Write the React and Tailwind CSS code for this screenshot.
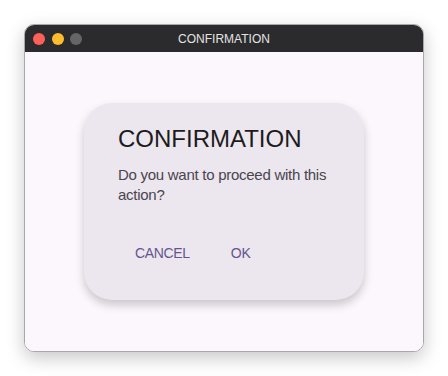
export default function App() {
  return (
    <div className="w-[448px] h-[376px] bg-white pt-6 pl-6" style={{ fontFamily: '"Liberation Sans", Arial, sans-serif' }}>
      <div className="w-[400px] h-[328px] rounded-[10px] border border-[#a9a7ab] overflow-hidden flex flex-col shadow-[0_6px_18px_rgba(0,0,0,0.22)]">
        {/* title bar */}
        <div className="relative h-[27px] bg-[#2b2b2d] flex items-center pl-[8px] gap-[6.5px] shrink-0">
          <span className="w-3 h-3 rounded-full bg-[#fe5f57]" />
          <span className="w-3 h-3 rounded-full bg-[#febc2e]" />
          <span className="w-3 h-3 rounded-full bg-[#656568]" />
          <span className="absolute inset-0 flex items-center justify-center text-[12px] text-[#e4e4e4]">CONFIRMATION</span>
        </div>

        {/* content */}
        <div className="flex-1 bg-[#fcf7fd] flex items-center justify-center">
          <div className="w-[280px] rounded-[28px] bg-[#ece6ee] pt-5 pb-[27px] pl-[34px] pr-6 shadow-[0_5px_10px_rgba(0,0,0,0.2)]">
            <h2 className="text-[24px] leading-[32px] text-[#1d1b20]">CONFIRMATION</h2>
            <p className="mt-[10px] text-[15px] leading-[20px] tracking-[-0.27px] text-[#49454f]">
              Do you want to proceed with this action?
            </p>
            <div className="mt-7 ml-[5px] flex gap-[17px]">
              <button className="h-10 px-3 text-[14px] leading-5 tracking-[-0.35px] text-[#65558f]">CANCEL</button>
              <button className="h-10 px-3 text-[14px] leading-5 text-[#65558f]">OK</button>
            </div>
          </div>
        </div>
      </div>
    </div>
  );
}
